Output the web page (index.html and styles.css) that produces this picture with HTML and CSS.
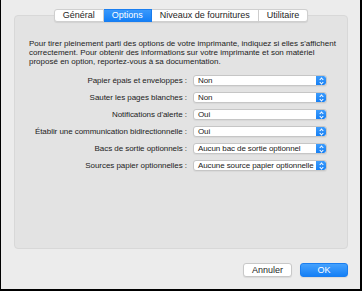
FILE: index.html
```html
<!DOCTYPE html>
<html lang="fr">
<head>
    <meta charset="UTF-8">
    <title>Options</title>
    <link rel="stylesheet" href="styles.css">
</head>
<body>
    <div class="window">
        <div class="tabs">
            <div class="tab">Général</div>
            <div class="tab active">Options</div>
            <div class="tab">Niveaux de fournitures</div>
            <div class="tab">Utilitaire</div>
        </div>

        <div class="panel">
            <p class="intro">Pour tirer pleinement parti des options de votre imprimante, indiquez si elles s'affichent correctement. Pour obtenir des informations sur votre imprimante et son matériel proposé en option, reportez-vous à sa documentation.</p>

            <div class="options">
                <label class="opt-label">Papier épais et enveloppes :</label>
                <div class="popup"><span>Non</span><i class="stepper"></i></div>

                <label class="opt-label">Sauter les pages blanches :</label>
                <div class="popup"><span>Non</span><i class="stepper"></i></div>

                <label class="opt-label">Notifications d'alerte :</label>
                <div class="popup"><span>Oui</span><i class="stepper"></i></div>

                <label class="opt-label">Établir une communication bidirectionnelle :</label>
                <div class="popup"><span>Oui</span><i class="stepper"></i></div>

                <label class="opt-label">Bacs de sortie optionnels :</label>
                <div class="popup"><span>Aucun bac de sortie optionnel</span><i class="stepper"></i></div>

                <label class="opt-label">Sources papier optionnelles :</label>
                <div class="popup"><span>Aucune source papier optionnelle</span><i class="stepper"></i></div>
            </div>
        </div>

        <div class="actions">
            <button class="btn">Annuler</button>
            <button class="btn primary">OK</button>
        </div>
    </div>
</body>
</html>
```

FILE: styles.css
```css
* {
    margin: 0;
    padding: 0;
    box-sizing: border-box;
}

body {
    font-family: "Liberation Sans", Arial, sans-serif;
    background: #000;
    color: #222;
}

.window {
    width: 362px;
    height: 291px;
    background: #ececec;
    border-left: 1px solid #000;
    border-right: 2px solid #000;
    border-bottom: 2px solid #000;
    padding: 9px 12px 0 13px;
}

.tabs {
    position: relative;
    z-index: 1;
    display: flex;
    justify-content: center;
    height: 13px;
}

.tab {
    height: 13px;
    line-height: 11px;
    font-size: 9px;
    padding: 0 8px;
    background: #fff;
    border: 1px solid #cfcfcf;
    border-left: none;
    color: #1e1e1e;
    box-shadow: 0 1px 1px rgba(0, 0, 0, 0.08);
}

.tab:first-child {
    border-left: 1px solid #cfcfcf;
    border-radius: 3px 0 0 3px;
}

.tab:last-child {
    border-radius: 0 3px 3px 0;
}

.tab.active {
    background: linear-gradient(#3a99fc, #1580f6);
    border-color: #1a7ef0;
    color: #fff;
}

.panel {
    margin-top: -7px;
    height: 234px;
    background: #e3e3e3;
    border: 1px solid #d8d8d8;
    border-radius: 4px;
    padding: 23px 10px 0 14px;
}

.intro {
    font-size: 8px;
    line-height: 9px;
    width: 310px;
}

.options {
    display: grid;
    grid-template-columns: 158px 134px;
    column-gap: 6px;
    row-gap: 6px;
    margin-top: 9px;
    align-items: center;
}

.opt-label {
    text-align: right;
    font-size: 8px;
    letter-spacing: -0.05px;
    white-space: nowrap;
}

.popup {
    position: relative;
    height: 11px;
    background: #fff;
    border: 1px solid #c6c6c6;
    border-radius: 3px;
    font-size: 8px;
    line-height: 9px;
    padding: 0 10px 0 4px;
    white-space: nowrap;
    overflow: hidden;
    letter-spacing: -0.1px;
    box-shadow: 0 1px 1px rgba(0, 0, 0, 0.05);
}

.stepper {
    position: absolute;
    top: 0;
    right: 0;
    width: 10px;
    height: 9px;
    border-radius: 0 2px 2px 0;
    background: linear-gradient(#3d9cfc, #1680f5);
}

.stepper::before,
.stepper::after {
    content: "";
    position: absolute;
    left: 4px;
    width: 2px;
    height: 2px;
    border-left: 1px solid #fff;
    border-top: 1px solid #fff;
}

.stepper::before {
    top: 2px;
    transform: rotate(45deg);
}

.stepper::after {
    top: 5px;
    transform: rotate(225deg);
}

.actions {
    display: flex;
    justify-content: flex-end;
    gap: 8px;
    margin-top: 14px;
}

.btn {
    font-family: inherit;
    font-size: 9px;
    height: 14px;
    width: 49px;
    border-radius: 3px;
    background: #fff;
    border: 1px solid #c8c8c8;
    color: #1e1e1e;
    box-shadow: 0 1px 1px rgba(0, 0, 0, 0.08);
}

.btn.primary {
    width: 48px;
    background: linear-gradient(#45a1fd, #1580f6);
    border-color: #1a7ef0;
    color: #fff;
}
```
